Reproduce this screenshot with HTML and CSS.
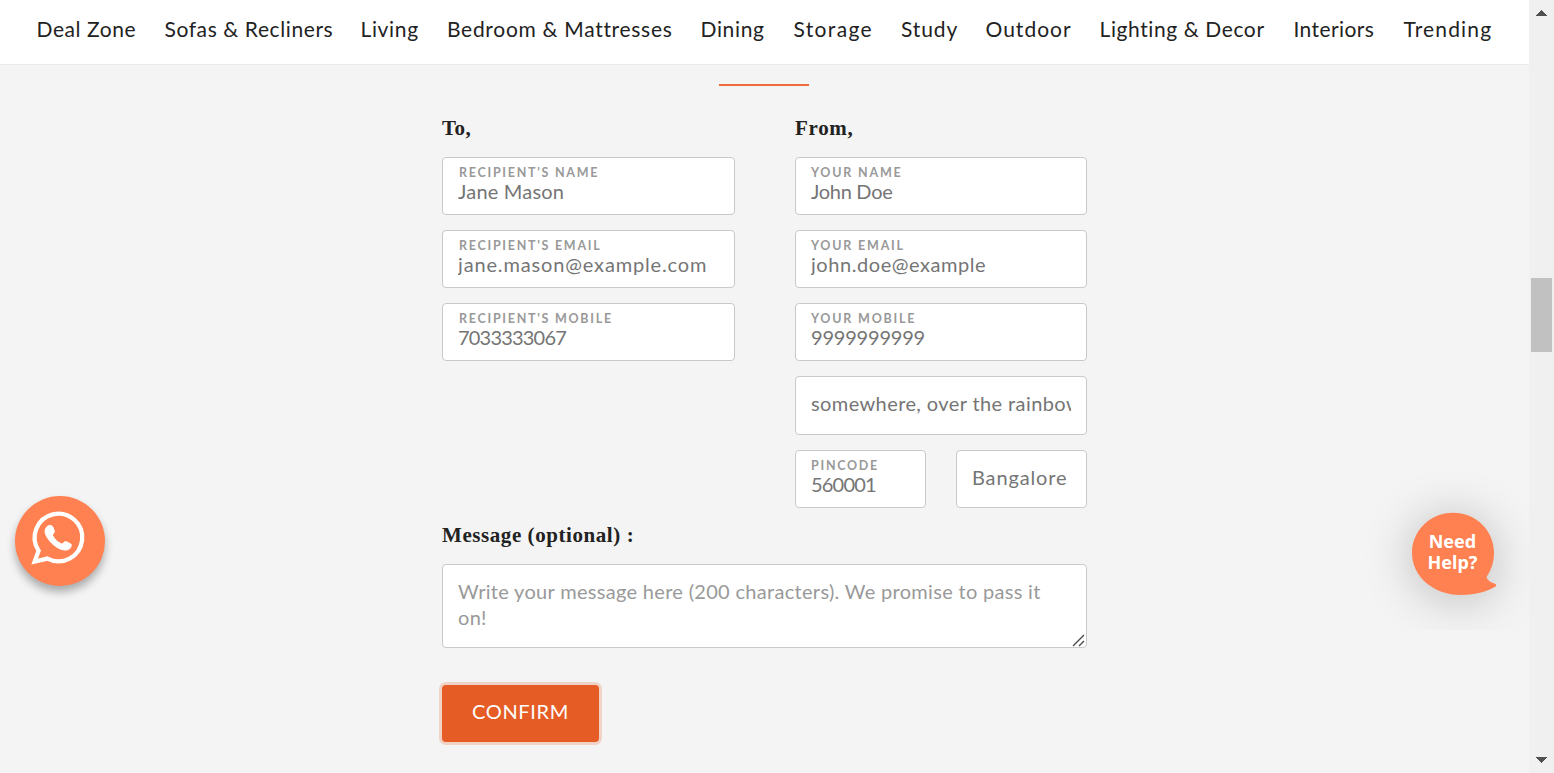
FILE: index.html
```
<!DOCTYPE html>
<html lang="en">
<head>
<meta charset="utf-8">
<title>Gift card</title>
<link rel="stylesheet" href="styles.css">
</head>
<body>
<div class="window">
  <div class="page">
    <nav class="nav">
      <a class="t56">Deal Zone</a><a class="t60">Sofas &amp; Recliners</a><a class="t65">Living</a><a class="t70">Bedroom &amp; Mattresses</a><a class="t65">Dining</a><a class="t135">Storage</a><a class="t90">Study</a><a class="t100">Outdoor</a><a class="t60">Lighting &amp; Decor</a><a class="t40">Interiors</a><a class="t115">Trending</a>
    </nav>
    <main class="main">
      <div class="rule"></div>
      <form class="form">
        <div class="columns">
          <section class="column">
            <h2 class="heading to">To,</h2>
            <label class="field"><span class="label t170">RECIPIENT'S NAME</span><input class="input t20" value="Jane Mason"></label>
            <label class="field"><span class="label t170">RECIPIENT'S EMAIL</span><input class="input t85" value="jane.mason@example.com"></label>
            <label class="field"><span class="label t170">RECIPIENT'S MOBILE</span><input class="input n80" value="7033333067"></label>
          </section>
          <section class="column">
            <h2 class="heading from">From,</h2>
            <label class="field"><span class="label t180">YOUR NAME</span><input class="input n30" value="John Doe"></label>
            <label class="field"><span class="label t180">YOUR EMAIL</span><input class="input t56" value="john.doe@example"></label>
            <label class="field"><span class="label t180">YOUR MOBILE</span><input class="input n20" value="9999999999"></label>
            <label class="field"><input class="input t40" value="somewhere, over the rainbow"></label>
            <div class="pair">
              <label class="field"><span class="label t170">PINCODE</span><input class="input n80" value="560001"></label>
              <label class="field"><input class="input t85" value="Bangalore"></label>
            </div>
          </section>
        </div>
        <h2 class="heading message-title">Message (optional) :</h2>
        <div class="message-box">
          <textarea class="message" placeholder="Write your message here (200 characters). We promise to pass it on!"></textarea>
          <svg class="grip" width="13" height="13" viewBox="0 0 13 13"><path d="M1 12 12 1M7 12l5-5" stroke="#4a4a4a" stroke-width="1.400" fill="none"/></svg>
        </div>
        <button class="confirm" type="button">CONFIRM</button>
      </form>
    </main>
  </div>
  <div class="scrollbar">
    <svg width="11" height="6" shape-rendering="crispEdges"><path d="M0 6 5.5 0 11 6z" fill="#505050"/></svg>
    <div class="thumb"></div>
    <svg width="11" height="6" shape-rendering="crispEdges"><path d="M0 0h11L5.5 6z" fill="#505050"/></svg>
  </div>
</div>
<div class="whatsapp">
  <svg width="90" height="90" viewBox="0 0 90 90">
    <path d="M19.700 65.500 23.600 54.600A23.800 23.800 0 1 1 32.500 62.600z" fill="none" stroke="#fff" stroke-width="4.300"/>
    <path d="M33.700 29.600c1.800-.5 3.500-.1 4.200 1.500l1.500 3.900c.4 1.500-2.200 3.200-1.700 4.600 2 3.800 5 6.700 8.900 8.300 1.500.4 2.600-2.900 4.300-2.400l4.900 2.400c1.400 1-.1 4.300-1.900 5.400-2.900 1.600-7.100.8-11.700-1.900-5.300-3.200-9.800-8.300-11.700-13.500-1.200-3.800.3-7.100 3.200-8.300z" fill="#fff" stroke="#fff" stroke-width=".9"/>
  </svg>
</div>
<div class="help-clip">
  <svg class="bubble" width="86" height="84" viewBox="0 0 86 84"><path d="M41 .8C64 .8 82 18.500 82 41c0 9.500-3 17.500-7.500 24 .8 3.500 4.500 5.300 9 7 .9.800.8 1.700 0 2.500C76 79 64 83 49 83 21 83 0 64 0 41 0 18.500 18.500.8 41 .8z" fill="#ff8050"/></svg>
  <div class="help-text">Need<br>Help?</div>
</div>
</body>
</html>
```
FILE: styles.css
```
* { box-sizing: border-box; }
body { margin: 0; font-family: Lato, sans-serif; color: #222; background: #f4f4f4; overflow: hidden; }
.window { display: flex; height: 773px; }
.page { width: 1529px; }
.nav { display: grid; grid-template-columns: 128px 196px 86.500px 253.500px 93px 107.500px 84.500px 114px 194px 110px auto; height: 65px; padding-left: 36.500px; background: #fff; border-bottom: 1px solid #ebebeb; font-size: 21px; line-height: 58px; white-space: nowrap; }
.main { padding-top: 19px; }
.rule { width: 90px; height: 2px; margin-left: 719px; background: #ee6b3b; }
.form { width: 645px; margin-left: 442px; }
.columns { display: flex; gap: 60px; padding-top: 27.900px; }
.column { width: 293px; display: flex; flex-direction: column; gap: 14.900px; }
.column + .column { width: 292px; }
.heading { margin: 0; font: bold 21px/28px "Liberation Serif", serif; color: #222; }
.to { letter-spacing: .5px; }
.from { letter-spacing: .7px; }
.field { display: flex; flex-direction: column; justify-content: center; height: 58.300px; padding: 0 15px 3px; border: 1px solid #c9c9c9; border-radius: 4px; background: #fff; }
.label { height: 15px; margin-top: -1px; font-size: 12.500px; font-weight: 700; line-height: 17px; color: #999; white-space: nowrap; padding-left: 1px; }
.column + .column .label { padding-left: 0; }
.input { width: 100%; height: 26px; margin-top: -1px; padding: 0; border: 0; outline: 0; background: none; color: #757575; font-family: Lato, sans-serif; font-size: 20px; line-height: 26px; }
.pair { display: grid; grid-template-columns: 131px 131px; gap: 30px; }
.message-title { margin-top: 13px; letter-spacing: .57px; }
.message-box { position: relative; height: 84px; margin-top: 15px; }
.message { display: block; width: 645px; height: 84px; padding: 13px 15px 15px; border: 1px solid #c9c9c9; border-radius: 4px; outline: 0; background: #fff; font-family: Lato, sans-serif; font-size: 20px; line-height: 26px; letter-spacing: .31px; resize: none; overflow: hidden; }
.message::placeholder { color: #999; }
.grip { position: absolute; right: 2px; bottom: 1px; }
.confirm { display: block; width: 157px; height: 57px; margin-top: 37px; padding: 0 0 4px; border: 0; border-radius: 4px; background: #e55d25; box-shadow: 0 0 0 3px #f1d2c6; color: #fff; font-family: Lato, sans-serif; font-size: 20px; letter-spacing: .65px; }
.scrollbar { display: grid; grid-template-rows: 268px 479px 6px; justify-items: center; align-content: start; width: 25px; padding-top: 10px; background: #f0f0f0; }
.thumb { width: 21px; height: 74px; background: #c1c1c1; }
.n80 { letter-spacing: -.8px; }
.n30 { letter-spacing: -.3px; }
.n20 { letter-spacing: -.2px; }
.t20 { letter-spacing: .2px; }
.t40 { letter-spacing: .4px; }
.t56 { letter-spacing: .56px; }
.t60 { letter-spacing: .6px; }
.t65 { letter-spacing: .65px; }
.t70 { letter-spacing: .7px; }
.t85 { letter-spacing: .85px; }
.t90 { letter-spacing: .9px; }
.t100 { letter-spacing: 1px; }
.t115 { letter-spacing: 1.150px; }
.t135 { letter-spacing: 1.350px; }
.t170 { letter-spacing: 1.720px; }
.t180 { letter-spacing: 1.800px; }
.whatsapp { position: absolute; left: 15px; top: 496px; width: 90px; height: 90px; border-radius: 50%; background: #ff8050; box-shadow: 0 6px 8px rgba(0,0,0,.3); }
.help-clip { position: absolute; left: 1354px; top: 470px; width: 175px; height: 160px; overflow: hidden; }
.bubble { position: absolute; left: 58px; top: 42px; overflow: visible; filter: drop-shadow(0 4px 24px rgba(0,0,0,.23)); }
.help-text { position: absolute; left: 67px; top: 61px; width: 63px; color: #fff; font: bold 18px/21px "Noto Sans", sans-serif; text-align: center; }
```
